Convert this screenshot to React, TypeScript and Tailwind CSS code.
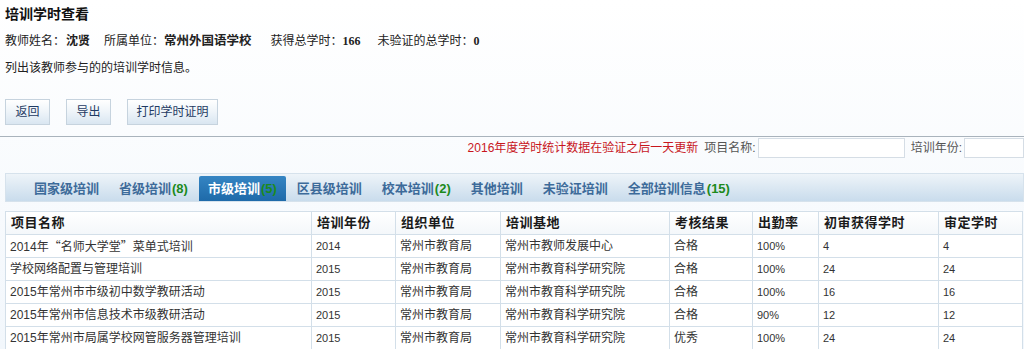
import React from "react";

type Row = {
  name: React.ReactNode;
  key: string;
  year: string;
  org: string;
  base: string;
  result: string;
  rate: string;
  first: string;
  final: string;
};

const Q = ({ c }: { c: string }) => <span className="font-['Noto_Sans_CJK_SC']">{c}</span>;

const rows: Row[] = [
  {
    key: "r1",
    name: (
      <>
        2014年<Q c="“" />名师大学堂<Q c="”" />菜单式培训
      </>
    ),
    year: "2014",
    org: "常州市教育局",
    base: "常州市教师发展中心",
    result: "合格",
    rate: "100%",
    first: "4",
    final: "4",
  },
  { key: "r2", name: "学校网络配置与管理培训", year: "2015", org: "常州市教育局", base: "常州市教育科学研究院", result: "合格", rate: "100%", first: "24", final: "24" },
  { key: "r3", name: "2015年常州市市级初中数学教研活动", year: "2015", org: "常州市教育局", base: "常州市教育科学研究院", result: "合格", rate: "100%", first: "16", final: "16" },
  { key: "r4", name: "2015年常州市信息技术市级教研活动", year: "2015", org: "常州市教育局", base: "常州市教育科学研究院", result: "合格", rate: "90%", first: "12", final: "12" },
  { key: "r5", name: "2015年常州市局属学校网管服务器管理培训", year: "2015", org: "常州市教育局", base: "常州市教育科学研究院", result: "优秀", rate: "100%", first: "24", final: "24" },
];

const tabs = [
  { label: "国家级培训" },
  { label: "省级培训", count: "(8)" },
  { label: "市级培训", count: "(5)", active: true },
  { label: "区县级培训" },
  { label: "校本培训", count: "(2)" },
  { label: "其他培训" },
  { label: "未验证培训" },
  { label: "全部培训信息", count: "(15)" },
];

const headers = ["项目名称", "培训年份", "组织单位", "培训基地", "考核结果", "出勤率", "初审获得学时", "审定学时"];
const widths = [306, 84, 105, 169, 83, 66, 120, 84];

function Btn({ children, w }: { children: React.ReactNode; w: string }) {
  return (
    <button
      className={`${w} h-[26px] border border-[#c6d3de] bg-gradient-to-b from-white via-[#eef4f9] to-[#d9e6f1] text-[12px] text-[#1f3b63]`}
    >
      {children}
    </button>
  );
}

export default function App() {
  return (
    <div
      className="h-[349px] w-[1024px] overflow-hidden bg-gradient-to-b from-white to-[#f2f7fc] text-[12px] text-[#222]"
      style={{ fontFamily: '"Liberation Sans", "Noto Sans CJK SC", sans-serif' }}
    >
      <div className="px-[5px] pt-[2px]">
        <h1 className="h-[24px] text-[14px] font-bold leading-[24px] text-[#111]">培训学时查看</h1>
        <div className="mt-[5px] flex h-[20px] items-center leading-[20px]">
          <span>教师姓名：</span>
          <b className="ml-[1px]">沈贤</b>
          <span className="ml-[14px]">所属单位：</span>
          <b className="text-[12.5px]">常州外国语学校</b>
          <span className="ml-[19px]">获得总学时：</span>
          <b className="font-['Liberation_Serif']">166</b>
          <span className="ml-[17px]">未验证的总学时：</span>
          <b className="font-['Liberation_Serif']">0</b>
        </div>
        <p className="mt-[7px] h-[20px] leading-[20px]">列出该教师参与的的培训学时信息。</p>
        <div className="mt-[21px] flex gap-[16px]">
          <Btn w="w-[45px]">返回</Btn>
          <Btn w="w-[45px]">导出</Btn>
          <Btn w="w-[91px]">打印学时证明</Btn>
        </div>
      </div>
      <div className="mt-[11px] h-[1px] bg-[#a9b3bc]" />
      <div className="flex h-[22px] items-center justify-end">
        <span className="text-[12px] text-[#c8161d]">2016年度学时统计数据在验证之后一天更新</span>
        <span className="ml-[6px] text-[#555]">项目名称:</span>
        <input className="ml-[2px] h-[20px] w-[147px] border border-[#d5dde5] bg-white" />
        <span className="ml-[6px] text-[#555]">培训年份:</span>
        <input className="ml-[2px] h-[20px] w-[60px] shrink-0 border border-[#d5dde5] bg-white" />
      </div>
      <div className="ml-[5px] mt-[14px] flex h-[29px] items-end gap-[2px] border border-[#d6e2ec] bg-gradient-to-b from-[#eef4f9] to-[#c9dcec] pl-[19px]">
        {tabs.map((t) => (
          <div
            key={t.label}
            className={`flex h-[25px] items-center px-[9px] text-[13px] font-bold ${
              t.active
                ? "rounded-t-[2px] bg-gradient-to-b from-[#3585c3] to-[#1e6aa9] text-white"
                : "text-[#3d6b9a]"
            }`}
          >
            {t.label}
            {t.count && <span className="ml-[1px] text-[#1c8a1c]">{t.count}</span>}
          </div>
        ))}
      </div>
      <table className="ml-[5px] mt-[9px] table-fixed border-collapse bg-white">
        <colgroup>
          {widths.map((w, i) => (
            <col key={i} style={{ width: w }} />
          ))}
        </colgroup>
        <thead>
          <tr className="h-[23px] bg-gradient-to-b from-white to-[#f3f7fa]">
            {headers.map((h) => (
              <th
                key={h}
                className="border border-[#d3dfe9] pl-[5px] text-left text-[13px] font-bold tracking-[0.5px] text-[#1a1a1a]"
              >
                {h}
              </th>
            ))}
          </tr>
        </thead>
        <tbody>
          {rows.map((r) => (
            <tr key={r.key} className="h-[23px]">
              <td className="border border-[#d3dfe9] pl-[4px] text-[12px] text-[#333]">{r.name}</td>
              <td className="border border-[#d3dfe9] pl-[4px] text-[11px] text-[#333]">{r.year}</td>
              <td className="border border-[#d3dfe9] pl-[4px] text-[12px] text-[#333]">{r.org}</td>
              <td className="border border-[#d3dfe9] pl-[4px] text-[12px] text-[#333]">{r.base}</td>
              <td className="border border-[#d3dfe9] pl-[4px] text-[12px] text-[#333]">{r.result}</td>
              <td className="border border-[#d3dfe9] pl-[4px] text-[11px] text-[#333]">{r.rate}</td>
              <td className="border border-[#d3dfe9] pl-[4px] text-[11px] text-[#333]">{r.first}</td>
              <td className="border border-[#d3dfe9] pl-[4px] text-[11px] text-[#333]">{r.final}</td>
            </tr>
          ))}
        </tbody>
      </table>
    </div>
  );
}
